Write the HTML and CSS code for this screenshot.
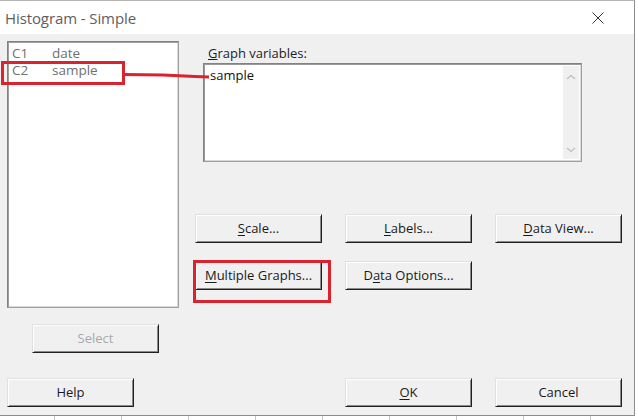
FILE: index.html
```html
<!DOCTYPE html>
<html>
<head>
<meta charset="utf-8">
<title>Histogram - Simple</title>
<link rel="stylesheet" href="styles.css">
</head>
<body>
<div class="dialog">
  <div class="titlebar">
    <span class="title">Histogram - Simple</span>
    <svg class="close" width="12" height="12" viewBox="0 0 12 12"><path d="M0.5 0.5 L11.5 11.5 M11.5 0.5 L0.5 11.5" stroke="#333" stroke-width="1" fill="none"/></svg>
  </div>
  <div class="content">
    <div class="top">
      <div class="leftcol">
        <div class="listbox">
          <div class="item"><span class="col">C1</span><span>date</span></div>
          <div class="item"><span class="col">C2</span><span>sample</span></div>
        </div>
        <button class="btn select" disabled>Select</button>
      </div>
      <div class="rightcol">
        <div class="label"><u>G</u>raph variables:</div>
        <div class="varbox">
          <div class="vartext">sample</div>
          <div class="scroll">
            <svg width="10" height="6" viewBox="0 0 10 6"><path d="M1 5 L5 1.5 L9 5" stroke="#c4c4c4" stroke-width="1.6" fill="none"/></svg>
            <svg width="10" height="6" viewBox="0 0 10 6"><path d="M1 1 L5 4.5 L9 1" stroke="#c4c4c4" stroke-width="1.6" fill="none"/></svg>
          </div>
        </div>
        <div class="btngrid">
          <button class="btn"><u>S</u>cale...</button>
          <button class="btn"><u>L</u>abels...</button>
          <button class="btn"><u>D</u>ata View...</button>
          <button class="btn"><u>M</u>ultiple Graphs...</button>
          <button class="btn">D<u>a</u>ta Options...</button>
        </div>
      </div>
    </div>
    <div class="bottom">
      <button class="btn">Help</button>
      <div class="spacer"></div>
      <button class="btn"><u>O</u>K</button>
      <button class="btn">Cancel</button>
    </div>
  </div>
  <div class="mark mark-row"></div>
  <div class="mark mark-btn"></div>
  <svg class="mark-line" width="90" height="8" viewBox="0 0 90 8"><polyline points="0,2.5 40,3 72,4.5 86,5" stroke="#d9232e" stroke-width="3" fill="none"/></svg>
</div>
</body>
</html>
```

FILE: styles.css
```css
html, body {
  margin: 0;
  padding: 0;
}
body {
  width: 638px;
  height: 420px;
  overflow: hidden;
  background-color: #ffffff;
  background-image: repeating-linear-gradient(to right, transparent 0, transparent 66px, #c8c8c8 66px, #c8c8c8 67px);
  background-position: -12px 0;
  font-family: "Open Sans", "Noto Sans", sans-serif;
}
.dialog {
  position: relative;
  width: 635px;
  height: 416px;
  background: #f0f0f0;
  border-right: 1px solid #8c8c8c;
  border-bottom: 1px solid #8c8c8c;
  border-top: 1px solid #b4b4b4;
  box-sizing: border-box;
}
.titlebar {
  height: 33px;
  background: #ffffff;
  display: flex;
  align-items: center;
  justify-content: space-between;
  padding: 0 30px 0 5px;
}
.title {
  font-size: 15px;
  color: #5e5e5e;
  letter-spacing: -0.1px;
}
.close {
  display: block;
}
.content {
  padding: 7px 0 0 7px;
}
.top {
  display: flex;
}
.leftcol {
  width: 172px;
  display: flex;
  flex-direction: column;
}
.listbox {
  height: 267px;
  background: #ffffff;
  box-sizing: border-box;
  border: 1px solid #a0a0a0;
  border-top-color: #828282;
  border-left-color: #828282;
  box-shadow: inset 1px 1px 0 #a0a0a0, inset -1px -1px 0 #d8d8d8;
  padding: 3px 0 0 4px;
}
.item {
  display: flex;
  font-size: 13.5px;
  line-height: 17px;
  color: #6f6f6f;
}
.col {
  width: 40px;
}
.btn {
  font-family: "Open Sans", "Noto Sans", sans-serif;
  font-size: 13px;
  color: #1a1a1a;
  width: 127px;
  height: 29px;
  padding: 0 0 1px 0;
  background: #f0f0f0;
  border: 1px solid;
  border-color: #e0e0e0 #202020 #202020 #e0e0e0;
  box-shadow: inset 1px 1px 0 #ffffff, inset -1px -1px 0 #8a8a8a;
  box-sizing: border-box;
}
.btn u {
  text-underline-offset: 2px;
}
.select {
  margin: 16px 0 0 25px;
  color: #a8a8a8;
}
.rightcol {
  margin-left: 16px;
  width: 427px;
  display: flex;
  flex-direction: column;
}
.label {
  font-size: 13px;
  color: #1e1e1e;
  padding-left: 13px;
  height: 15px;
  line-height: 15px;
  margin-top: 5px;
}
.varbox {
  margin: 2px 0 0 8px;
  width: 379px;
  height: 99px;
  box-sizing: border-box;
  background: #ffffff;
  border: 1px solid #a0a0a0;
  border-top-color: #828282;
  border-left-color: #828282;
  box-shadow: inset 1px 1px 0 #9a9a9a, inset -1px -1px 0 #d8d8d8;
  display: flex;
  justify-content: space-between;
  padding: 2px 2px 2px 6px;
}
.vartext {
  font-size: 13px;
  line-height: 18px;
  color: #111;
}
.scroll {
  width: 16px;
  background: #f0f0f0;
  display: flex;
  flex-direction: column;
  justify-content: space-between;
  align-items: center;
  padding: 8px 0 6px;
}
.scroll svg {
  display: block;
}
.btngrid {
  margin-top: 52px;
  display: grid;
  grid-template-columns: 127px 127px 127px;
  column-gap: 23px;
  row-gap: 18px;
}
.bottom {
  margin-top: 25px;
  display: flex;
  width: 615px;
}
.spacer {
  width: 211px;
}
.bottom .btn + .btn {
  margin-left: 23px;
}
.bottom .spacer + .btn {
  margin-left: 0;
}
.mark {
  position: absolute;
  border: 3px solid #d9232e;
  box-sizing: border-box;
}
.mark-row {
  left: 1px;
  top: 60px;
  width: 124px;
  height: 24px;
}
.mark-btn {
  left: 193px;
  top: 259px;
  width: 138px;
  height: 43px;
}
.mark-line {
  position: absolute;
  left: 123px;
  top: 71px;
}
```
